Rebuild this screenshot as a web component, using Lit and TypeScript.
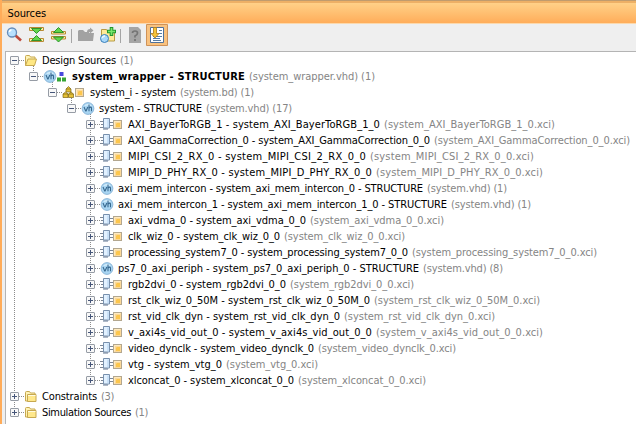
import { LitElement, html, svg, css } from "lit";
import { customElement } from "lit/decorators.js";

type Kind = "open" | "folder" | "top" | "bd" | "vh" | "ip";
// depth, kind, expanded, name, detail, name width, detail width
type Row = [number, Kind, boolean, string, string, number, number];

const ROWS: Row[] = [
  [0, "open", true, "Design Sources", "(1)", 74, 13],
  [1, "top", true, "system_wrapper - STRUCTURE", "(system_wrapper.vhd) (1)", 173, 126],
  [2, "bd", true, "system_i - system", "(system.bd) (1)", 86, 74],
  [3, "vh", true, "system - STRUCTURE", "(system.vhd) (17)", 103, 86],
  [4, "ip", false, "AXI_BayerToRGB_1 - system_AXI_BayerToRGB_1_0", "(system_AXI_BayerToRGB_1_0.xci)", 252, 171],
  [4, "ip", false, "AXI_GammaCorrection_0 - system_AXI_GammaCorrection_0_0", "(system_AXI_GammaCorrection_0_0.xci)", 302, 196],
  [4, "ip", false, "MIPI_CSI_2_RX_0 - system_MIPI_CSI_2_RX_0_0", "(system_MIPI_CSI_2_RX_0_0.xci)", 238, 164],
  [4, "ip", false, "MIPI_D_PHY_RX_0 - system_MIPI_D_PHY_RX_0_0", "(system_MIPI_D_PHY_RX_0_0.xci)", 244, 167],
  [4, "vh", false, "axi_mem_intercon - system_axi_mem_intercon_0 - STRUCTURE", "(system.vhd) (1)", 305, 80],
  [4, "vh", false, "axi_mem_intercon_1 - system_axi_mem_intercon_1_0 - STRUCTURE", "(system.vhd) (1)", 329, 80],
  [4, "ip", false, "axi_vdma_0 - system_axi_vdma_0_0", "(system_axi_vdma_0_0.xci)", 178, 134],
  [4, "ip", false, "clk_wiz_0 - system_clk_wiz_0_0", "(system_clk_wiz_0_0.xci)", 152, 121],
  [4, "ip", false, "processing_system7_0 - system_processing_system7_0_0", "(system_processing_system7_0_0.xci)", 280, 185],
  [4, "vh", false, "ps7_0_axi_periph - system_ps7_0_axi_periph_0 - STRUCTURE", "(system.vhd) (8)", 301, 80],
  [4, "ip", false, "rgb2dvi_0 - system_rgb2dvi_0_0", "(system_rgb2dvi_0_0.xci)", 158, 124],
  [4, "ip", false, "rst_clk_wiz_0_50M - system_rst_clk_wiz_0_50M_0", "(system_rst_clk_wiz_0_50M_0.xci)", 242, 166],
  [4, "ip", false, "rst_vid_clk_dyn - system_rst_vid_clk_dyn_0", "(system_rst_vid_clk_dyn_0.xci)", 212, 151],
  [4, "ip", false, "v_axi4s_vid_out_0 - system_v_axi4s_vid_out_0_0", "(system_v_axi4s_vid_out_0_0.xci)", 244, 167],
  [4, "ip", false, "video_dynclk - system_video_dynclk_0", "(system_video_dynclk_0.xci)", 186, 138],
  [4, "ip", false, "vtg - system_vtg_0", "(system_vtg_0.xci)", 94, 92],
  [4, "ip", false, "xlconcat_0 - system_xlconcat_0_0", "(system_xlconcat_0_0.xci)", 166, 128],
  [0, "folder", false, "Constraints", "(3)", 55, 13],
  [0, "folder", false, "Simulation Sources", "(1)", 89, 13],
];

const LABEL_GAP: Record<Kind, number> = { open: 42, folder: 42, top: 53, bd: 52, vh: 42, ip: 52 };

const folder = svg`<path d="M1.500 12V3.500q0-1 1-1h3l1 1.500h4.500v8z" fill="#fff3b5" stroke="#c7a850"/><path d="M3.500 12.500V5.500h8.500v7z" fill="#ffe88c" stroke="#c7a850"/><path d="M4 6.500h7.500" stroke="#fffbe0"/>`;
const openFolder = svg`<path d="M1.500 12.500V3.500q0-1 1-1h3l1 1.500h4.500v3" fill="#fff3b5" stroke="#c7a850"/><path d="M1.500 12.500l2.500-6.500h8.500l-2 6.500z" fill="#ffe884" stroke="#c7a850"/>`;
const vh = svg`<circle cx="7" cy="7.500" r="5.900" fill="#a9d5f2" stroke="#7dabd0" stroke-width=".8"/><path d="M3 5a5 5 0 0 1 8 0q-4-1-8 0" fill="#d8effc"/><path d="M3 6l1.700 4h.4l1.700-4M8 3.500v6.800M8 7q2.500-2 2.500.5v2.800" fill="none" stroke="#37688f" stroke-width="1.100"/>`;
const square = (x: number) => svg`<rect x="${x + 0.5}" y="3.500" width="8" height="8" fill="#fbd898" stroke="#b3a78f"/><path d="M${x + 1.5} 10.500v-6h6" fill="none" stroke="#ffebc0"/><path d="M${x + 4} 6h3v4h-4v-3z" fill="#fcc64d"/>`;
const ART = {
  open: openFolder,
  folder,
  vh,
  top: svg`${vh}<rect x="16.500" y="3" width="4" height="4" fill="#4848dc"/><rect x="14" y="8.500" width="4" height="4" fill="#35a535"/><rect x="19" y="8.500" width="4" height="4" fill="#35a535"/>`,
  bd: svg`<g fill="#e5c137" stroke="#806715" stroke-width=".7"><path d="M4 4l2.500-2.500L9 4v3H4zM1 9l2.500-2L6 9v3.500H1zM6.500 9L9 7l2.500 2v3.500h-5z"/><path d="M4 4h5M1 9h5M6.500 9h5" fill="none"/></g>${square(13)}`,
  ip: svg`<path d="M0 4.500h3M1 7.500h2M0 10.500h3M9 5.500h4M9 8.500h4" stroke="#7c8796"/><path d="M3.500 1.500h6v9.500h-6z" fill="#e2f1ff" stroke="#7890ad"/><path d="M3 12h5" stroke="#60748f"/><path d="M8 2.500v8" stroke="#b0d0ef"/>${square(13)}`,
};

@customElement("app-root")
class AppRoot extends LitElement {
  static styles = css`
    :host { display: block; height: 424px; overflow: hidden; box-sizing: border-box; border-left: 2px solid #ffac59;
      background: #efefef; font: 11px/16px "DejaVu Sans Condensed", "DejaVu Sans", sans-serif; font-stretch: condensed; color: #000; }
    svg { display: block; flex: none; }
    .title { height: 24px; box-sizing: border-box; margin-left: -2px; padding-left: 7.500px; line-height: 25px; font-size: 11px;
      border-top: 1px solid #bf9c6e; border-bottom: 1px solid #fcd9ac;
      background: linear-gradient(#edb066 0 2px, #ffd188 2px, #ffad5a); }
    .bar { height: 27px; display: block; }
    .tree { height: 373px; box-sizing: border-box; margin-left: 3px; padding-left: 3px; border: solid #b4b4b4; border-width: 1px 0 0 1px; background: #fff; }
    .row { height: 16px; display: flex; white-space: pre; line-height: 18px; }
    .name, .detail { flex: none; display: block; }
    .fit { display: inline-block; }
    .detail { color: #858585; margin-left: 4px; }
    .bold { font-weight: 700; }
  `;

  firstUpdated() {
    // Spread each label over the column width recorded for it.
    this.renderRoot.querySelectorAll<HTMLElement>(".fit").forEach((el) => {
      const width = Number(el.dataset.width);
      const natural = el.getBoundingClientRect().width;
      el.style.letterSpacing = `${(width - natural) / el.textContent!.length}px`;
    });
  }

  lead(index: number) {
    const [depth, kind, expanded] = ROWS[index];
    const x = depth * 19;
    const w = x + LABEL_GAP[kind] - 9;
    const last = index === ROWS.length - 1;
    const deeper = ROWS[index + 1]?.[0] === 4;
    return svg`<svg width="${w}" height="16" viewBox="0 0 ${w} 16">
      <g stroke="#8c8c8c" stroke-dasharray="1 1" fill="none">
        <path d="M5.500 ${index ? 0 : 8}v${index ? (last ? 3 : 16) : 8}"/>
        ${depth > 0 ? svg`<path d="M${x + 5.5} 0v${depth === 4 && deeper ? 16 : 5}"/>` : ""}
        ${expanded ? svg`<path d="M${x + 24.5} 14v2"/>` : ""}
        <path d="M${x + 10} 8.500h5"/>
      </g>
      <rect x="${x + 1.5}" y="4.500" width="8" height="8" rx=".5" fill="#f8f8f8" stroke="#969ca5"/>
      <path d="M${x + 3} 8.500h5${expanded ? "" : "M" + (x + 5.5) + " 6v5"}" stroke="#465679"/>
      <g transform="translate(${x + 15} 1)">${ART[kind]}</g>
    </svg>`;
  }

  render() {
    return html`
      <div class="title"><span class="fit" data-width="38.5">Sources</span></div>
      <svg class="bar" width="200" height="27" viewBox="2 24 200 27">
        <path d="M15.500 35.500l5.500 5" stroke="#bd493b" stroke-width="2.600"/><circle cx="12" cy="32.500" r="4.500" fill="#b9e1ff" stroke="#668cba" stroke-width="1.300"/><path d="M9.500 32q0-2 2-2" stroke="#fff" stroke-width="1.500" fill="none"/>
        <g fill="#fff1a8" stroke="#b78b36"><path d="M29.500 27.500h14v3h-14zM29.500 38.500h14v3h-14zM51.500 31.500h14v2.500h-14zM51.500 36.500h14v2.500h-14z"/></g>
        <g fill="#61d54b" stroke="#238b23" stroke-width=".9"><path d="M31.500 28.500h10l-5 5zM31.500 40.500h10l-5-5zM53.500 32.500h10l-5-5zM53.500 37h10l-5 5z"/></g>
        <path d="M71.500 29v14M120.500 29v14" stroke="#a5a5a5"/>
        <path d="M78 41V31l1-1h4l2 2h2q0-3 3-3v-1.500l3.500 3-3.500 3V32q-1 0-1 1h5l-1 8z" fill="#a2a2a2"/>
        <path d="M101.500 41V29.500h5l1 1.500h7V41z" fill="#ffe998" stroke="#b79b45"/><circle cx="104.500" cy="38.500" r="4" fill="#a9d8fb" stroke="#397fba"/><path d="M102 38q1-2 3-2" stroke="#eafaff" fill="none" stroke-width="1.500"/><path d="M111.500 27v9M107 31.500h9" stroke="#22972d" stroke-width="3.600"/><path d="M111.500 28v7M108 31.500h7" stroke="#78e56c" stroke-width="1.600"/>
        <path d="M129 27h9l3 3V43h-12z" fill="#a5a5a5"/><path d="M132.500 33q0-2 2.500-2t2.500 2-2.500 3v1.500M135 39v2" stroke="#747474" stroke-width="1.700" fill="none"/>
        <path d="M146.500 24.500h21v21h-21z" fill="#f9c27f" stroke="#cf9258"/>
        <path d="M150.500 27.500h13v15h-13z" fill="#fff" stroke="#4f719b"/><path d="M159 30.500h3M159 33.500h3M153 36.500h9M153 38.500h7M153 40.500h8" stroke="#577da5"/><path d="M153.500 27.500h3v6h2.500l-4 4.500-4-4.500h2.500z" fill="#f6c339" stroke="#ad7a17" stroke-width=".8"/>
      </svg>
      <div class="tree">
        ${ROWS.map(([, kind, , name, detail, nw, dw], i) => html`<div class="row">
          ${this.lead(i)}<span class="name ${kind === "top" ? "bold" : ""}"><span class="fit" data-width="${nw}">${name}</span></span><span class="detail"><span class="fit" data-width="${dw}">${detail}</span></span>
        </div>`)}
      </div>`;
  }
}
